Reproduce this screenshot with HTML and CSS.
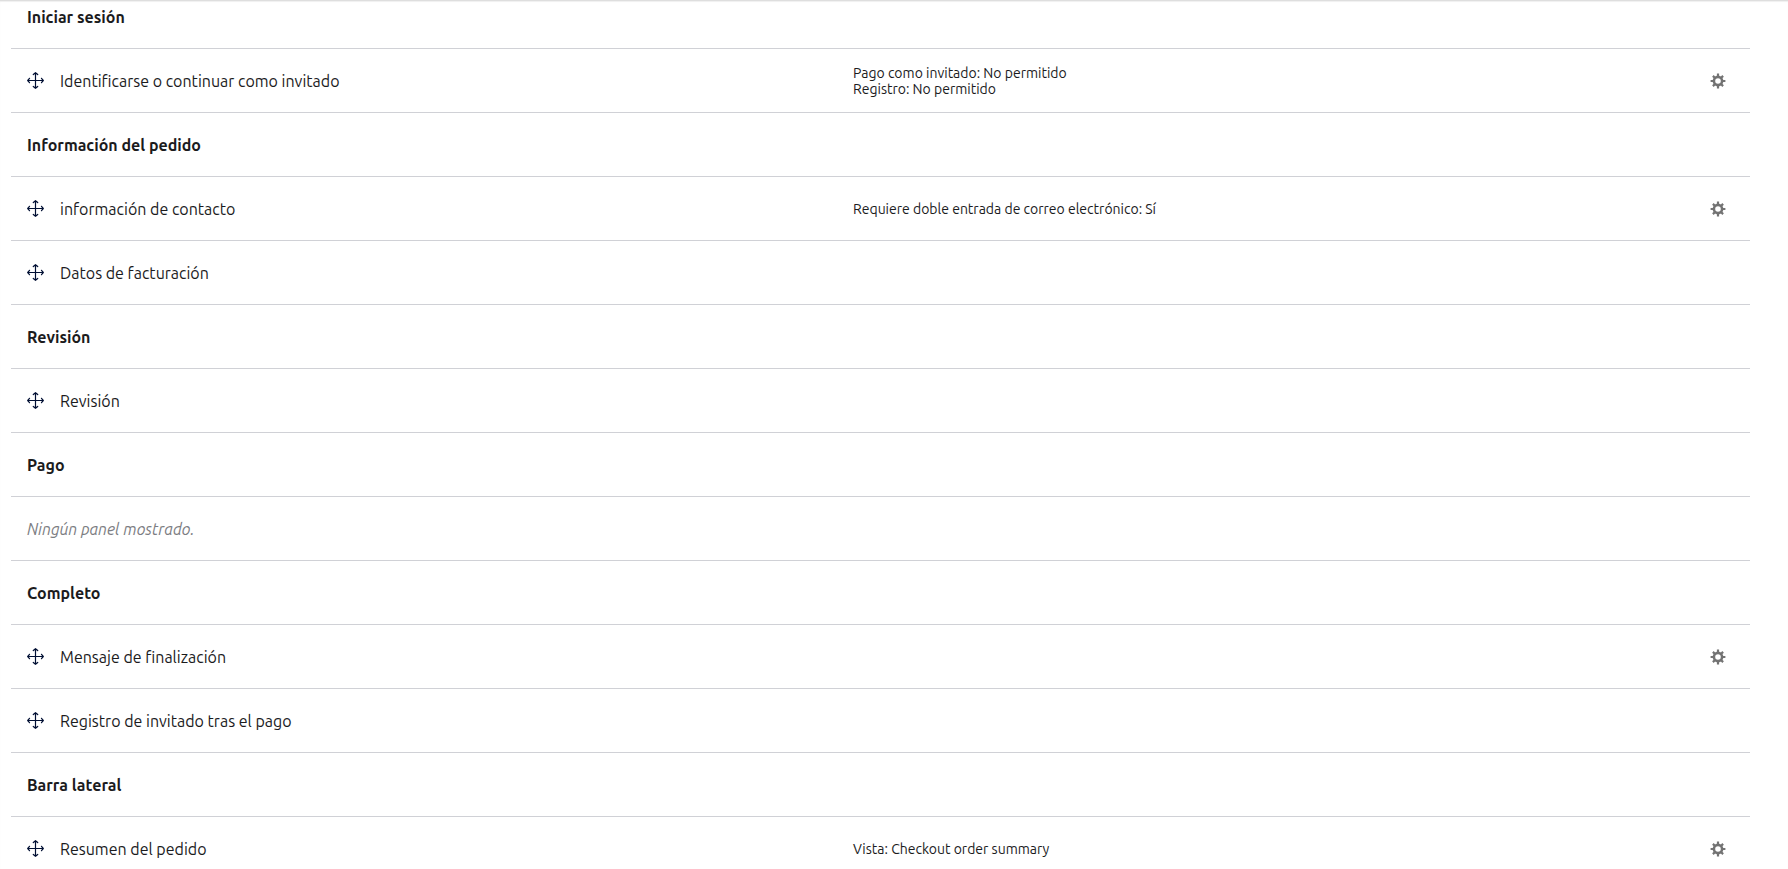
FILE: index.html
```html
<!DOCTYPE html>
<html lang="es">
<head>
    <meta charset="UTF-8">
    <meta name="viewport" content="width=device-width, initial-scale=1.0">
    <title>Paneles del pedido</title>
    <link rel="stylesheet" href="styles.css">
</head>
<body>
    <!-- Shared icons -->
    <svg class="sprite" aria-hidden="true">
        <symbol id="icon-move" viewBox="0 0 17 17">
            <path d="M8.5 1v15M1 8.5h15M6.3 2.5L8.5 .7l2.2 1.8M6.3 14.5l2.2 1.8 2.2-1.8M2.5 6.3L.7 8.5l1.8 2.2M14.5 6.3l1.800 2.200-1.800 2.200" fill="none" stroke="#000f33" stroke-width="1.2" stroke-linecap="round" stroke-linejoin="round"/>
        </symbol>
        <symbol id="icon-gear" viewBox="0 0 16 16">
            <circle cx="8" cy="8" r="4.1" fill="none" stroke="#737373" stroke-width="2.6"/>
            <path d="M8 .6v3M8 12.4v3M.6 8h3M12.4 8h3M2.900 2.900L5 5M11 11l2.100 2.100M2.900 13.100L5 11M11 5l2.100-2.100" fill="none" stroke="#737373" stroke-width="2.2"/>
        </symbol>
    </svg>

    <main class="page">
        <table class="panes">
            <colgroup>
                <col class="col-name">
                <col class="col-summary">
                <col class="col-actions">
            </colgroup>
            <tbody>
                <!-- Login -->
                <tr class="region first"><th colspan="3" scope="rowgroup">Iniciar sesión</th></tr>
                <tr>
                    <td><div class="pane"><a href="#" class="handle" aria-label="Mover"><svg><use href="#icon-move"/></svg></a>Identificarse o continuar como invitado</div></td>
                    <td class="summary">Pago como invitado: No permitido<br>Registro: No permitido</td>
                    <td class="actions"><button type="button" class="settings" aria-label="Editar"><svg><use href="#icon-gear"/></svg></button></td>
                </tr>
            </tbody>
            <tbody>
                <!-- Order information -->
                <tr class="region"><th colspan="3" scope="rowgroup">Información del pedido</th></tr>
                <tr>
                    <td><div class="pane"><a href="#" class="handle" aria-label="Mover"><svg><use href="#icon-move"/></svg></a>información de contacto</div></td>
                    <td class="summary">Requiere doble entrada de correo electrónico: Sí</td>
                    <td class="actions"><button type="button" class="settings" aria-label="Editar"><svg><use href="#icon-gear"/></svg></button></td>
                </tr>
                <tr>
                    <td><div class="pane"><a href="#" class="handle" aria-label="Mover"><svg><use href="#icon-move"/></svg></a>Datos de facturación</div></td>
                    <td class="summary"></td>
                    <td class="actions"></td>
                </tr>
            </tbody>
            <tbody>
                <!-- Review -->
                <tr class="region"><th colspan="3" scope="rowgroup">Revisión</th></tr>
                <tr>
                    <td><div class="pane"><a href="#" class="handle" aria-label="Mover"><svg><use href="#icon-move"/></svg></a>Revisión</div></td>
                    <td class="summary"></td>
                    <td class="actions"></td>
                </tr>
            </tbody>
            <tbody>
                <!-- Payment -->
                <tr class="region"><th colspan="3" scope="rowgroup">Pago</th></tr>
                <tr><td colspan="3" class="empty">Ningún panel mostrado.</td></tr>
            </tbody>
            <tbody>
                <!-- Complete -->
                <tr class="region"><th colspan="3" scope="rowgroup">Completo</th></tr>
                <tr>
                    <td><div class="pane"><a href="#" class="handle" aria-label="Mover"><svg><use href="#icon-move"/></svg></a>Mensaje de finalización</div></td>
                    <td class="summary"></td>
                    <td class="actions"><button type="button" class="settings" aria-label="Editar"><svg><use href="#icon-gear"/></svg></button></td>
                </tr>
                <tr>
                    <td><div class="pane"><a href="#" class="handle" aria-label="Mover"><svg><use href="#icon-move"/></svg></a>Registro de invitado tras el pago</div></td>
                    <td class="summary"></td>
                    <td class="actions"></td>
                </tr>
            </tbody>
            <tbody>
                <!-- Sidebar -->
                <tr class="region"><th colspan="3" scope="rowgroup">Barra lateral</th></tr>
                <tr>
                    <td><div class="pane"><a href="#" class="handle" aria-label="Mover"><svg><use href="#icon-move"/></svg></a>Resumen del pedido</div></td>
                    <td class="summary">Vista: Checkout order summary</td>
                    <td class="actions"><button type="button" class="settings" aria-label="Editar"><svg><use href="#icon-gear"/></svg></button></td>
                </tr>
            </tbody>
        </table>
    </main>
</body>
</html>
```
FILE: styles.css
```css
* {
    box-sizing: border-box;
}
body {
    margin: 0;
    height: 100vh;
    overflow: hidden;
    background-color: #fff;
    color: #1b1b1d;
    font-family: Ubuntu, 'Noto Sans', sans-serif;
    font-size: 16px;
    line-height: 20px;
}
.sprite {
    display: none;
}
.page {
    padding: 0 38px 0 11px;
    border-top: 1px solid #dedede;
    box-shadow: inset 0 1px 1px #f0f0f0;
}
.panes {
    width: 100%;
    table-layout: fixed;
    border-collapse: separate;
    border-spacing: 0;
}
.col-name {
    width: 47.5%;
}
.col-actions {
    width: 100px;
}
.panes th,
.panes td {
    height: 64px;
    padding: 0 16px;
    border-bottom: 1px solid #d0d1d6;
    text-align: left;
    vertical-align: middle;
}
/* The first region sits right under the top bar */
.panes .first th {
    height: 48px;
    padding-top: 6px;
    vertical-align: top;
}
.region th {
    font-weight: 700;
}
.pane {
    display: flex;
    align-items: center;
    gap: 16px;
}
.handle,
.handle svg {
    display: block;
    width: 17px;
    height: 17px;
}
.panes .summary {
    font-size: 14px;
    line-height: 16px;
}
.panes .actions {
    padding-right: 24px;
    line-height: 16px;
    text-align: right;
}
.settings {
    display: inline-flex;
    padding: 0;
    border: none;
    background: none;
    cursor: pointer;
    vertical-align: top;
}
.settings svg {
    width: 16px;
    height: 16px;
}
.panes .empty {
    color: #7c7d82;
    font-style: italic;
}
```
